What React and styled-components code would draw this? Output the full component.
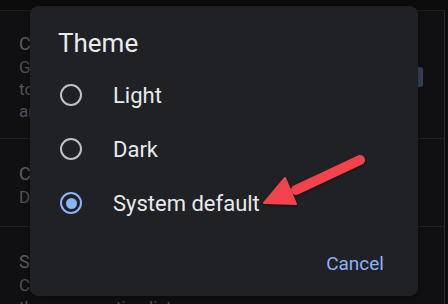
import React, { useState } from 'react'
import styled, { createGlobalStyle } from 'styled-components'

const GlobalStyle = createGlobalStyle`
  html, body {
    margin: 0;
    padding: 0;
    background: #0c0c0d;
  }
  * { box-sizing: border-box; }
`

const options = ['Light', 'Dark', 'System default']

function App() {
  const [theme, setTheme] = useState('System default')

  return (
    <Screen>
      <GlobalStyle />
      <Page>
        <Setting>
          <SettingText>
            <SettingTitle>Chat features</SettingTitle>
            <SettingBody>Get smarter messaging, chat</SettingBody>
            <SettingBody>to friends over Wi-Fi, see</SettingBody>
            <SettingBody>and more</SettingBody>
          </SettingText>
          <Pill />
        </Setting>
        <Setting>
          <SettingText>
            <SettingTitle>Choose theme</SettingTitle>
            <SettingBody>Dark</SettingBody>
          </SettingText>
        </Setting>
        <Setting last>
          <SettingText>
            <SettingTitle>Swipe actions</SettingTitle>
            <SettingBody>Choose what happens when you swipe in</SettingBody>
            <SettingBody>the conversation list</SettingBody>
          </SettingText>
        </Setting>
      </Page>

      <Dialog>
        <Title>Theme</Title>
        <OptionList>
          {options.map((o) => (
            <Option key={o} onClick={() => setTheme(o)}>
              <Radio checked={theme === o} />
              <OptionLabel>{o}</OptionLabel>
            </Option>
          ))}
        </OptionList>
        <Footer>
          <TextButton>Cancel</TextButton>
        </Footer>
        <Arrow viewBox="0 0 110 60" width="110" height="60">
          <line x1="98" y1="7" x2="34" y2="37" stroke="#f2424b" strokeWidth="10" strokeLinecap="round" />
          <polygon points="2,50 23,25 34,51" fill="#f2424b" stroke="#f2424b" strokeWidth="2" strokeLinejoin="round" />
        </Arrow>
      </Dialog>
    </Screen>
  )
}

export default App

const Screen = styled.div`
  position: relative;
  width: 448px;
  height: 304px;
  overflow: hidden;
  background: #0c0c0d;
  padding-top: 10px;
  font-family: Roboto, "Liberation Sans", sans-serif;
`

const Page = styled.div`
  width: 445px;
  height: 294px;
  background: #101012;
  border-top: 1px solid #1e1f21;
  border-right: 1px solid #2a2b2e;
  overflow: hidden;
`

const Setting = styled.div`
  display: flex;
  align-items: center;
  justify-content: space-between;
  padding: ${(p) => (p.last ? '23px 21px 0 19px' : '21px 21px 16px 19px')};
  border-bottom: ${(p) => (p.last ? 'none' : '1px solid #222326')};
  &:nth-child(2) {
    padding-top: 23px;
    padding-bottom: 18px;
  }
`

const SettingText = styled.div`
  display: flex;
  flex-direction: column;
  white-space: nowrap;
`

const SettingTitle = styled.div`
  font-size: 18px;
  line-height: 24px;
  color: #5b5d61;
`

const SettingBody = styled.div`
  font-size: 17px;
  line-height: 22px;
  color: #505256;
`

const Pill = styled.div`
  width: 28px;
  height: 20px;
  border-radius: 3px;
  background: #35435a;
`

const Dialog = styled.div`
  position: absolute;
  left: 30px;
  top: 6px;
  width: 388px;
  height: 290px;
  background: #202124;
  border-radius: 8px;
  padding: 21px 34px 14px 28px;
  display: flex;
  flex-direction: column;
  box-shadow: 0 2px 6px rgba(0, 0, 0, 0.4);
`

const Title = styled.h2`
  margin: 0 0 9px;
  font-size: 26px;
  line-height: 32px;
  font-weight: 400;
  color: #e8eaed;
`

const OptionList = styled.div`
  display: flex;
  flex-direction: column;
`

const Option = styled.div`
  display: flex;
  align-items: center;
  height: 54px;
  padding-left: 2px;
  cursor: pointer;
`

const Radio = styled.span`
  width: 22px;
  height: 22px;
  border-radius: 50%;
  border: 2.5px solid ${(p) => (p.checked ? '#8ab4f8' : '#bdc1c6')};
  display: flex;
  align-items: center;
  justify-content: center;
  flex-shrink: 0;
  &::after {
    content: '';
    width: 11px;
    height: 11px;
    border-radius: 50%;
    background: ${(p) => (p.checked ? '#8ab4f8' : 'transparent')};
  }
`

const OptionLabel = styled.span`
  margin-left: 31px;
  font-size: 22px;
  line-height: 28px;
  padding-top: 2px;
  color: #e8eaed;
`

const Footer = styled.div`
  margin-top: auto;
  display: flex;
  justify-content: flex-end;
`

const TextButton = styled.button`
  background: none;
  border: none;
  padding: 0;
  font-family: inherit;
  font-size: 19px;
  line-height: 36px;
  font-weight: 400;
  color: #8ab4f8;
  cursor: pointer;
`

const Arrow = styled.svg`
  position: absolute;
  left: 232px;
  top: 147px;
  filter: drop-shadow(0 1px 1px rgba(0, 0, 0, 0.5));
`
